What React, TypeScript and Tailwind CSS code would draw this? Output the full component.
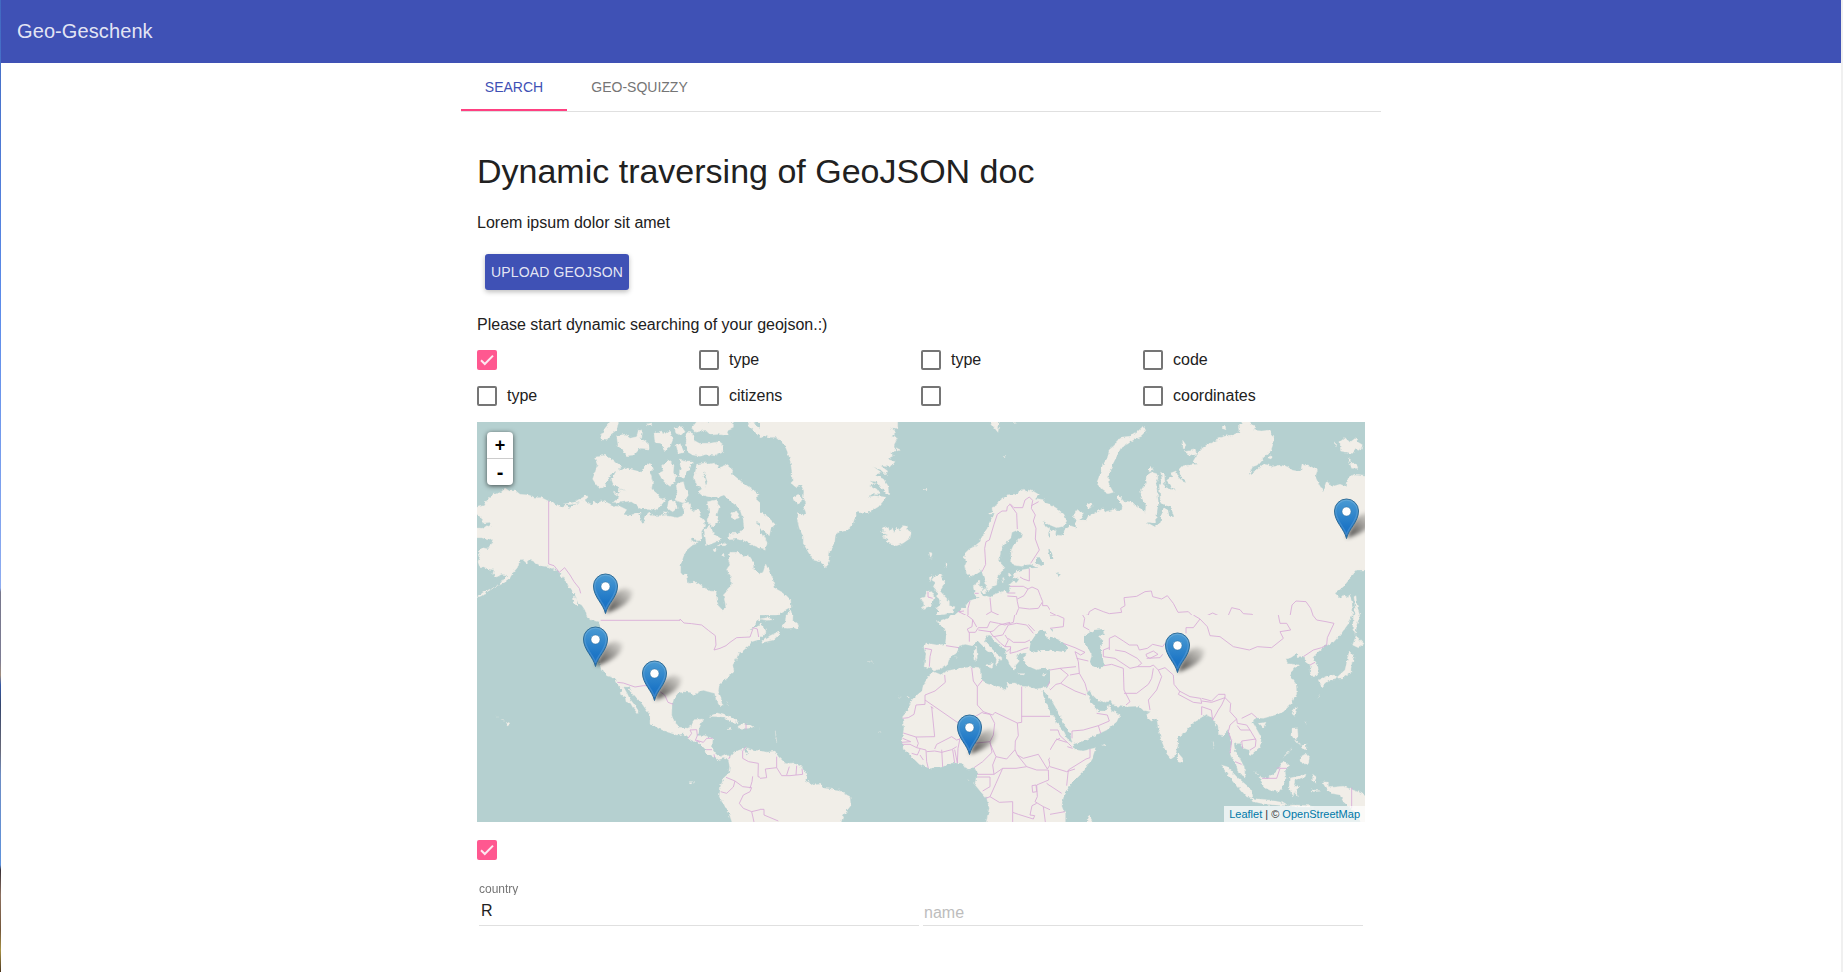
import React from "react";

const WATER = "#b5d0d0";
const LAND = "#f1eee8";

type Tile = { x: number; y: number; w: number; h: number; land: string; water?: string; borders: string };

const tiles: Tile[] = [
  {
    x: -7, y: -7, w: 290, h: 200,
    land:
      // mainland
      "M0 280L21 277 40 272 48 260 58 248 70 238 82 236 95 230 105 219 118 228 138 228 150 238 175 240 200 248 215 248 235 258 250 264 262 271 278 277 290 272 280 267 300 264 312 262 325 254 340 247 348 238 354 246 345 256 352 265 370 269 374 257 380 264 395 257 410 262 432 273 452 275 470 284 460 299 482 301 500 294 512 294 522 325 524 308 536 292 545 302 575 302 600 304 622 308 638 302 642 285 636 268 650 260 662 270 660 282 672 292 676 282 686 282 692 305 702 318 704 332 694 350 696 368 684 382 670 366 662 375 684 385 668 390 650 405 640 425 632 450 632 472 648 480 652 502 680 502 700 515 720 528 738 530 740 550 745 572 758 586 768 580 765 560 760 540 768 532 775 520 785 510 785 490 775 475 772 460 780 450 775 435 780 412 805 412 820 425 836 420 850 440 850 460 870 475 884 480 890 455 900 440V640H398L375 618 350 600 345 585 335 570 325 565 318 545 306 525 292 505 280 490 268 472 255 465 235 455 210 452 195 445 190 438 178 436 170 445 156 432 148 440 142 458 128 474 118 492 100 505 80 514 55 528 35 542 20 548 40 532 70 518 90 508 100 492 112 480 95 478 80 486 68 478 72 464 55 462 40 455 30 458 24 440 30 425 25 408 38 398 55 402 66 385 68 370 52 374 35 368 0 368V338L40 340 50 332 64 336 60 322 40 324 34 308 21 298 0 296Z" +
      // arctic islands
      "M374 127L405 121 430 135 455 155 442 165 420 180 405 212 390 221 378 208 368 192 376 170 382 150Z" +
      "M425 195L440 165 470 158 490 165 515 172 520 158 540 145 550 160 540 172 548 200 545 222 560 235 575 255 588 252 572 272 556 285 535 280 512 284 500 270 480 258 455 262 430 262 448 245 430 232 450 236 445 222 470 228 432 212Z" +
      "M566 175L580 168 575 155 595 135 612 150 610 170 618 182 612 205 600 214 582 200 575 190Z" +
      "M628 132L650 138 670 138 660 158 650 178 642 190 625 182 632 160Z" +
      "M618 206L640 200 645 220 655 240 640 264 615 255 622 230Z" +
      "M680 148L710 143 712 160 700 180 708 210 698 222 682 212 673 190Z" +
      "M392 65L405 40 420 21H445L440 45 420 60 410 76 395 74ZM440 62L465 58 480 70 500 65 505 42 515 48 512 70 535 85 538 102 510 100 492 120 470 122 460 108 444 92Z" +
      "M552 55L575 48 580 60 600 46 608 75 600 95 585 108 572 85 555 82ZM612 38L635 35 645 50 635 62 618 55ZM618 88L630 85 642 112 625 116Z" +
      "M652 52L668 55 670 75 688 85 720 85 745 80 760 92 758 112 735 122 710 118 690 124 668 120 652 110 648 80ZM680 20H790V40L770 48 776 62 745 58 722 60 706 45 678 52 665 40ZM525 28L545 24 545 32Z" +
      "M596 256L615 260 622 280 608 290 592 280ZM580 290L595 292 590 302 578 300Z" +
      // Baffin
      "M712 148L735 144 748 158 770 150 788 165 786 178 800 188 820 205 850 225 868 240 855 250 875 268 870 280 885 290 900 300V345L880 330 860 320 880 350 890 380 900 400 884 415 870 400 845 390 825 378 800 372 776 374 778 355 808 355 822 340 820 315 812 290 800 272 780 258 762 240 740 248 715 245 695 240 684 230 705 215 712 200 705 178Z" +
      "M712 260L738 255 748 275 740 300 745 320 728 335 710 318 718 295ZM702 345L720 332 735 360 755 372 735 382 710 392ZM782 295L800 288 808 308 790 314ZM745 392L765 380 770 392ZM727 403L740 402 735 412ZM755 420L762 415 762 428ZM832 28L850 45 865 62 900 72V0H860Z" +
      "M310 540L322 555 320 575 312 568ZM302 508L318 530 308 534ZM283 488L302 504 300 520Z",
    water: "M285 270L315 268 340 255 300 278ZM505 296L520 300 522 326 516 320ZM470 286L505 280 570 290 600 300 540 292 500 294ZM852 20L862 35 878 40 890 30Z",
    borders:
      "M236 258V447L252 452 268 472 284 458 300 480 312 500 328 520 332 535M398 616H630V612",
  },
  {
    x: 283, y: -7, w: 290, h: 200,
    land:
      // Greenland
      "M-30 0V65L0 68 12 62 30 67 50 67 65 80 78 100 86 120 92 145 96 170 97 208 110 218 122 208 132 228 130 245 138 265 130 275 138 292 130 302 116 292 112 315 118 340 130 365 130 385 145 412 160 435 180 440 198 456 205 440 210 405 224 382 226 358 240 350 262 347 280 322 285 305 294 285 300 296 330 290 355 275 380 247 345 242 324 246 336 234 360 236 350 222 328 210 348 208 328 197 350 200 362 215 380 236 386 236 384 212 370 192 345 180 364 172 340 155 362 164 378 180 383 168 362 152 392 156 405 140 382 132 400 122 392 110 406 112 402 90 412 70 395 64 408 50 392 38 413 40V0Z" +
      "M102 245L115 238 128 255 112 266 100 258ZM408 98L420 104 412 108Z" +
      "M362 350L375 352 365 338 384 334 388 348 396 338 402 350 410 338 418 345 430 332 442 334 443 345 453 352 450 370 430 384 410 392 398 390 378 380 388 372 368 366 384 360Z" +
      "M-20 282L0 292 20 302 45 328 32 342 28 362 14 350 0 340-20 330ZM-20 350L0 358 12 362 22 385 15 402 0 398-20 390ZM-20 475L0 475 10 470 17 447 25 465 38 490 45 520 72 535 92 555 93 578 75 588 55 600V604H-20ZM68 640L72 615 80 600 92 584 96 600 92 640Z" +
      // Britain and Ireland
      "M525 482L550 478 542 492 555 496 550 512 540 528 555 545 568 558 568 572 585 575 580 590 556 598 524 602 540 590 528 580 542 570 542 555 530 545 532 528 520 515 526 502 515 495ZM498 532L516 530 522 548 514 572 484 582 492 568 484 550 496 546ZM508 486L516 482 510 500ZM558 444L563 446 558 458ZM492 222L502 220 498 228ZM508 412L516 414 512 430Z" +
      // Europe
      "M615 415L628 402 642 395 658 382 668 362 682 340 692 315 704 297 682 297 698 290 696 278 712 270 716 258 735 250 742 240 765 238 780 228 792 222 800 232 812 224 835 238 825 250 850 254 858 264 875 270 900 285V340L875 332 862 325 848 318 856 335 872 345 865 358 876 375 895 380 900 360V650H530L530 625 558 622 562 608 580 604 598 588 612 580 628 558 642 553 656 548 645 540 640 515 650 500 660 496 657 512 670 520 660 532 668 542 690 546 700 540 730 528 745 536 752 522 750 508 758 500 770 503 778 492 762 488 760 475 780 466 812 460 838 458 810 448 785 454 760 450 752 438 754 405 762 388 782 368 786 352 772 345 756 352 752 370 736 384 722 405 718 438 732 452 726 472 712 486 710 510 694 516 690 528 680 524 676 500 668 478 664 464 655 472 632 486 620 476 614 455 620 440 612 430Z" +
      "M664 530L676 520 680 530 670 536ZM725 490L732 488 728 504ZM745 478L752 476 750 486ZM690 21H718L714 52 704 40ZM730 124L736 126 732 128ZM762 22L768 24Z",
    water: "M828 428L838 426 850 445 838 455 828 442ZM864 402L874 410 880 430 870 428ZM865 350L895 372 882 384 868 366ZM890 470L900 476 892 480Z",
    borders:
      "M666 470L677 448 674 400 678 380 688 375 702 328 712 298 726 288 740 288 742 275 750 268 770 295 772 342M750 266L762 278 788 278 795 255 808 246 818 256 814 280 826 300 820 318 828 340 826 372 838 405 812 445M814 272L836 260M808 462V498L790 492 780 486M750 514H790L804 522 816 516 834 524 842 545 848 560 835 580 808 582 776 578 772 560 770 545 742 543M804 522L792 542 772 552M742 534H766M690 548L694 590 680 598 676 610 690 620 700 618M694 590L716 600 730 610 762 614 776 580M644 535H656M630 558L624 580 624 604 596 590 612 588M624 604L636 618M848 562V572L862 572 875 592 900 604M716 600L720 622M504 530V546L518 550",
  },
  {
    x: 573, y: -7, w: 325, h: 200,
    land:
      "M-40 255L0 268 20 280 42 298 50 318 40 334 20 338 0 330-40 312Z" +
      "M-40 370L0 345 18 348 16 360 38 362 44 345 62 332 78 338 76 312 70 302 78 286 96 292 98 306 88 318 108 318 114 304 130 296 150 284 160 278 165 292 190 284 214 286 218 272 200 248 206 240 220 258 242 260 262 274 286 292 288 270 276 250 272 228 280 215 290 205 288 182 305 172 320 176 324 190 318 205 322 235 325 262 328 280 330 240 328 210 336 195 332 168 343 178 345 205 355 222 374 224 360 208 350 196 368 184 360 175 378 168 384 185 398 200 410 203 392 185 388 165 400 152 440 148 430 138 442 118 450 105 470 90 500 76 528 72 548 60 568 52 565 35 575 25 580 0H598L602 30 618 32 610 46 635 48 655 46 668 62 670 85 662 108 640 128 622 150 608 155 595 180 620 165 640 148 655 150 668 156 690 150 712 155 728 166 752 170 756 148 780 155 802 165 796 185 805 205 820 230 828 212 832 200 845 215 870 208 890 215 895 185 915 178 960 182V465H920L900 490 880 515 855 535 870 550 880 540 895 548 898 538 904 556 908 580V640H-40Z" +
      "M284 38L288 50 275 64 250 75 225 92 212 100 202 120 188 148 176 178 175 205 190 232 175 236 158 226 140 205 150 178 158 150 172 130 178 104 192 92 202 76 218 66 240 64 262 50 275 38ZM112 265L125 262 126 275 114 280ZM296 160L304 154 310 166 298 170Z" +
      "M870 80L885 68 900 82 918 68 922 80 938 90 930 106 918 102 906 116 890 112 872 108ZM900 145L918 144 924 160 905 160ZM895 130L902 134 898 140ZM855 80L860 88 858 96ZM652 128L662 122 664 132ZM398 76L408 90 400 102ZM402 110L435 104 440 118 425 122ZM515 40L525 30 528 44ZM502 70L530 62 545 66 518 78ZM912 545L918 542 920 570 930 600 932 620 916 626 912 600 916 580Z",
    water: "M322 285L330 240 332 265 350 272 362 275 372 305 358 305 354 285 342 278 334 300 332 322 315 335 290 322 312 324 320 305ZM0 405L6 415 10 432 0 432ZM20 470L32 482 26 486ZM340 200L356 220 345 216Z",
    borders:
      "M0 592L20 602 42 606V630M98 630L104 602 115 600 118 590 135 580 160 590 178 596 215 592 212 580 225 572 222 548 260 544 285 530 304 528 308 545 335 552 352 542 370 565 384 592 415 590 430 605 446 614 430 630M446 614L462 606 488 594 510 604 532 608 545 578 570 584 580 596 606 598 626 614 650 612 680 602 694 604 720 604 726 570 738 558 768 560 782 580 790 604 808 612 818 626M694 604L684 630M446 612L460 630",
  },
  {
    x: -7, y: 193, w: 290, h: 207,
    land:
      "M325-20L345 0 365 15 385 20 394 38 390 60 385 100 388 135 396 160 410 182 435 190 442 205 455 225 450 235 466 245 468 260 482 265 490 280 504 296 504 286 492 268 478 250 472 236 460 215 475 216 485 234 500 252 515 265 540 300 540 325 565 340 590 350 620 360 640 356 662 374 690 387 706 402 710 415 735 425 745 434 760 430 775 434 779 455 776 475 762 488 752 512 748 545 760 565 778 598 792 640H900V405L885 405 865 408 840 402 828 398 812 404 792 410 780 425 768 417 750 425 738 418 726 402 728 375 708 362 680 362 688 340 698 312 672 314 665 332 650 340 630 337 612 320 605 300 606 270 612 250 622 236 640 230 660 232 675 240 684 230 700 226 722 232 734 235 738 255 750 274 756 268 752 246 745 228 748 208 768 190 792 170 788 150 800 130 805 115 818 108 836 92 845 80 862 75 880 68 900 80V-20Z" +
      "M718 304L742 294 768 302 790 310 806 324 780 320 760 306ZM804 334L822 325 852 335 838 340 806 340ZM868 338L880 338 880 342 868 342ZM774 338L786 342 775 344ZM107 322L120 328 112 333ZM76 304L82 306ZM92 314L102 318ZM658 500L668 500 668 506 660 506ZM672 503L678 505Z" +
      "M770 262L776 270",
    water: "M830 50L850 38 860 20 885 5 900 0V15L888 30 865 32 850 42ZM878 35L900 44 890 50ZM828 400L834 405 832 420 826 412Z",
    borders:
      "M392 16H630V12L642 24 665 26 695 30 715 46 736 62 738 90 732 105 750 100 768 92 780 82 800 68 840 66 850 38 862 42 866 66M442 202L460 204 495 216 520 212 545 212M570 230L584 240 594 262 610 268M654 370L665 355 660 345 680 344 682 362 676 376 690 382M680 376L700 382 710 370 728 370M708 404L726 404M732 418L734 428M776 432L780 424M828 395L818 408 818 430 836 440 865 445 864 485 880 490 900 480M768 487L795 498 818 515 845 518 840 530 820 540 808 565 820 580 845 590 878 582 900 608M795 498L790 516 770 535 752 530M845 590L852 621M848 484L846 500 840 520M886 465L900 463M828 326V344",
  },
  {
    x: 283, y: 193, w: 290, h: 207,
    land:
      // South America and Atlantic Canada
      "M-20 405L0 407 20 412 45 408 55 425 78 446 100 444 125 455 142 482 136 495 160 510 182 508 192 520 235 525 270 545 272 572 250 600 238 640H-20ZM-20 20L0 28 15 40 18 52 5 65-20 62ZM5 80L30 62 55 50 58 58 40 75 10 82ZM64 38L76 22 80-20 100-20 98 18 112 24 118 45 102 38 85 40ZM-20-20H50V0H-20ZM0 12L20 8 42 14 20 16Z" +
      // Europe and Asia Minor
      "M572 0L565 10 532 20 540 32 552 36 560 55 556 88 530 90 498 84 492 98 498 118 492 155 510 158 522 168 545 160 562 148 570 125 592 112 598 92 616 88 636 92 652 76 668 92 684 108 704 120 710 135 706 155 718 142 714 128 724 136 726 128 708 114 690 96 674 78 678 62 690 60 704 78 722 92 736 102 738 122 748 148 762 166 768 150 778 138 768 122 790 114 800 114 796 122 790 132 802 152 830 164 850 160 868 164 878 175 872 195 862 215 830 222 806 215 786 214 768 204 744 205 738 224 705 214 680 206 662 192 660 158 640 156 600 160 560 168 545 180 525 172 510 178 490 210 486 228 458 252 444 285 428 305 432 340 426 375 430 400 455 425 478 448 508 460 545 456 575 444 605 444 618 462 645 460 652 475 644 508 662 530 680 550 688 580 682 605 676 640H900V-30H580Z" +
      "M676 150L700 145 696 160 678 154ZM640 108L650 105 652 130 642 136ZM646 92L651 100 646 104ZM770 176L795 176 790 180ZM846 180L862 176 852 184ZM414 243L424 248M440 243L448 248 444 250ZM585 130L592 128ZM325 140L340 142ZM355 352L365 350ZM46 350L50 380ZM624 494L628 498Z",
    water:
      "M808 106L812 82 825 62 842 46 862 50 852 60 870 72 900 60V110L850 104 828 112ZM870 50L890 45 886 55ZM848 226L862 240 876 265 892 290 900 300V335L888 330 882 305 864 275 850 245Z",
    borders:
      "M558 92L596 98M494 100L515 104 510 125 508 155M620 0L638 14 636 35 622 42 626 52 646 52 655 38 682 38 690 20 715 25 735 30 760 22 764 0M638 14L650 36M628 52V80M655 45L690 50 700 48 718 30 750 22M690 50L700 65 728 60 745 30 770 25 800 30 820 55M805 28L824 48M700 62L722 85 735 95 745 75 735 60M735 95L752 95 750 115 770 110 795 100 805 98M745 70L760 82 795 82 810 75M740 110L752 100M635 158L640 198 652 215V270L670 290M668 195L652 215M554 180L556 202 525 228 495 240V268L468 270 462 298 445 308 428 310M495 255L592 322 640 308 670 290 698 300 705 292 772 324 785 322V215M785 304H888M515 275L524 365 468 366 430 354M520 280L512 275M468 366L475 385 470 398 498 405 500 440 505 460M428 370L440 375 452 380 425 382M428 388L450 388 470 398M455 415L472 420 480 402M480 420L490 435M524 402L530 388 575 365 590 375 600 372M500 410L524 408 545 412 575 404 590 395M545 404L548 456M578 404L584 444M584 404L592 444M592 444L594 400 600 370M668 294L690 298 704 325 700 360 690 380 640 385M690 380L696 412 668 440 642 458M690 385L708 425 698 450 702 478H652M708 425L740 432 765 404 766 378 775 362 772 324M765 404L772 420 800 455 768 460 728 460 702 478M772 420L790 430 835 418 862 462 870 450 866 432 890 410M800 455L830 465 865 465 866 495 830 510 832 545 825 560 850 575 900 598M728 460L708 505 690 545 678 550M652 486H690V515L668 528M690 545L718 562 758 560V592L775 598 820 612 824 602 810 600 816 572 830 565M758 592V621M850 575L856 621M816 512L828 510 830 530 818 532ZM860 505L900 535M50 425L50 458 16 462 20 488 0 490M50 458L65 482 90 482 128 478 126 462M88 455L80 480M110 452L108 480M0 583H12V600L55 618M880 162L870 200 862 215M870 200L895 195 900 160M870 220L876 235 895 222",
  },
  {
    x: 573, y: 193, w: 325, h: 207,
    land:
      "M-40-20H910L906 0 896 25 870 60 850 82 822 95 800 115 788 128 802 148 806 172 798 182 784 186 780 168 782 152 766 140 764 122 742 125 740 116 722 128 706 132 714 146 746 150 730 162 720 182 738 208 740 238 722 268 700 290 675 300 640 310 618 308 608 322 634 368 630 395 600 422 598 405 582 400 572 385 552 386 556 412 568 428 582 455 586 486 566 474 558 448 544 428 540 408 546 382 534 342 520 362 506 358 504 335 486 310 470 298 450 310 432 320 408 348 385 364 383 395 376 420 362 430 350 416 334 375 325 340 320 308 304 318 286 302 302 290 280 286 266 273 225 275 190 272 182 258 165 262 142 254 128 240 118 226 110 234 120 255 134 275 142 288 162 288 172 284 178 268 184 288 210 298 200 320 170 345 130 364 100 378 68 388 60 355 40 325 30 300 8 262 0 250-40 200Z" +
      "M-40 250L0 300 14 302 20 325 42 350 54 375 68 385 75 405 100 408 137 398 128 425 100 470 62 508 42 540 35 570 46 598V640H-40Z" +
      "M384 414L398 430 396 444 384 440ZM513 450L532 455 560 485 600 520 606 548 590 545 560 510 535 480ZM603 550L650 554 695 562 712 572 650 568 608 560ZM716 570L740 570 780 572 790 576 740 576ZM630 486L652 492 682 468 700 438 716 452 705 470 708 490 690 530 660 526 640 515ZM718 490L768 478 765 486 735 494 732 510 750 515 738 525 745 545 732 532 728 546 718 518ZM726 340L742 338 744 362 738 375 752 388 738 382 726 362ZM752 425L770 415 778 425 776 445 760 448 750 435ZM752 392L768 385 768 405 756 400ZM698 428L726 398 715 412ZM816 500L835 502 835 518 862 515 880 514 960 545V640H945L915 590 880 560 870 540 845 535 830 522ZM788 478L798 485 794 505 788 495ZM785 524L812 528 790 530ZM742 276L735 304 726 296 732 280ZM628 325L648 322 640 338ZM805 196L832 184 852 180 862 186 885 165 892 135 898 108 912 125 904 150 902 172 880 188 858 190 838 196 815 216 810 205ZM908 90L918 62 942 86 925 98ZM912-20H922L930 0 920 30 916 58 908 42ZM118 600L128 622H108ZM155 390L165 388 165 392ZM490 380L492 402ZM780 582L770 600 750 606ZM670 585L690 595 680 598ZM615 470L624 480ZM765 320L768 325ZM800 248L808 242Z",
    water:
      "M-20 60L0 65 25 75 55 95 45 112 0 104-20 106ZM102 64L130 45 162 42 164 54 145 64 160 78 150 100 158 125 162 152 150 162 125 152 120 140 125 120 112 95 102 80ZM0 45L8 42 4 54Z",
    borders:
      "M98 0L104 10 100 35 118 45M178 105V70L195 62 220 78 238 90 262 90 268 105 292 100 308 88 338 95 345 85M178 98L160 105 160 125 195 130 225 150 240 160 262 155 275 145 262 130 225 110 195 105M288 118L310 108 324 118 300 130 290 125ZM290 130L330 128 338 118M262 155L300 155 310 150 325 165 345 158 370 180 372 208 388 228 420 245 452 250 455 265 430 262 385 238 390 228M408 55L408 38 430 38 450 12 430 0M450 12L472 35 480 62 510 65 550 95 598 105 622 95 665 98 700 70 690 50 722 45 710 25 690 25 685 0M788 0L800 15 828 20 852 25 832 68 830 90 815 98 790 105 760 125M780 150L795 142M455 250L485 258 505 238 525 238 525 248 485 262 455 258M525 248L515 270 505 285 488 315 484 285 455 275 455 300M525 248L542 265 540 290 560 312 540 330 535 350 545 378 540 415M560 312L562 325 590 330 600 345 590 345 572 345 562 332M575 310L605 295 620 308M600 345L618 375 616 395 600 405M575 378L618 372M575 378L578 400M555 440L575 448M325 165L335 185 320 225 295 255 300 285M222 235L260 235 295 208 305 190 310 160M220 160L222 225 240 260 228 270M162 152L185 148 220 160M40 85L75 98 105 112 92 120 75 110M75 110L85 140 88 175 105 205 112 230M80 130L115 138M0 165L30 160 78 155M30 160L55 180 32 205 18 208 0 225M60 180L88 175M32 205L75 228 108 240M66 370L66 348 100 345 145 332 178 318 172 300 140 295M145 332L152 355M0 345L24 345 30 362 55 385 65 395M30 370L18 375 0 405M18 372L50 382M52 395L68 400M120 402V428L108 432 55 465 50 512M0 455L50 470 75 462M0 512L35 535M0 598L45 590M905 518V580M636 490L680 490 690 460 710 460M680 460L690 458M0 0H20L42 10 40 35 0 40",
  },
];

const pins: [number, number][] = [
  [128.5, 192],
  [118.5, 245],
  [177.5, 279],
  [492.5, 333],
  [700.5, 251],
  [869.5, 117],
];

function Pin({ x, y }: { x: number; y: number }) {
  return (
    <g transform={`translate(${x} ${y})`}>
      <path d="M0-1 8-19Q19-30 27-23Q27-9 0-1Z" fill="url(#shade)" filter="url(#soft)" />
      <path d="M0-.5C-2-10-12-17-12-28A12 12 0 0 1 12-28C12-17 2-10 0-.5Z" fill="url(#pin)" stroke="#2e6c97" strokeWidth="1" />
      <path d="M0-4C-2-12-10.8-18-10.8-28A10.8 10.8 0 0 1 10.8-28C10.8-18 2-12 0-4Z" fill="none" stroke="#fff" strokeOpacity=".14" strokeWidth="1.2" />
      <circle cy="-27.5" r="4.5" fill="#fff" stroke="#2e6c97" strokeOpacity=".6" strokeWidth=".8" />
    </g>
  );
}

function WorldMap() {
  return (
    <svg width="888" height="400" viewBox="0 0 888 400" className="block">
      <defs>
        <linearGradient id="pin" x1="0" y1="0" x2="0" y2="1">
          <stop offset="0" stopColor="#4b9bd3" />
          <stop offset=".7" stopColor="#1d76c6" />
          <stop offset="1" stopColor="#1b70c4" />
        </linearGradient>
        <linearGradient id="shade" x1="0" y1="1" x2="1" y2="0">
          <stop offset="0" stopColor="#000" stopOpacity=".75" />
          <stop offset=".5" stopColor="#000" stopOpacity=".38" />
          <stop offset="1" stopColor="#000" stopOpacity=".05" />
        </linearGradient>
        <filter id="soft" x="-40%" y="-40%" width="180%" height="180%"><feGaussianBlur stdDeviation="2" /></filter>
        <filter id="coast" x="0" y="0" width="100%" height="100%">
          <feTurbulence type="fractalNoise" baseFrequency=".09" numOctaves="3" seed="4" result="n" />
          <feDisplacementMap in="SourceGraphic" in2="n" scale="11" xChannelSelector="R" yChannelSelector="G" />
        </filter>
      </defs>
      <rect width="888" height="400" fill={WATER} />
      {tiles.map((t) => (
        <svg key={`${t.x},${t.y}`} x={t.x} y={t.y} width={t.w} height={t.h} viewBox={`0 0 ${t.w * 3} ${t.h * 3}`}>
          <g filter="url(#coast)">
            <path d={t.land} fill={LAND} stroke={LAND} strokeWidth="1" />
            {t.water && <path d={t.water} fill={WATER} />}
          </g>
          <path d={t.borders} fill="none" stroke="#d9aed8" strokeWidth="2.7" strokeLinejoin="round" />
        </svg>
      ))}
      {pins.map(([x, y]) => <Pin key={x} x={x} y={y} />)}
    </svg>
  );
}

function Check({ label, checked }: { label?: string; checked?: boolean }) {
  return (
    <label className="flex h-5 items-center gap-[10px]">
      {checked ? (
        <span className="size-5 shrink-0 rounded-[2px] bg-[#ff5890]">
          <svg viewBox="0 0 20 20" className="size-5" fill="none" stroke="#fff" strokeOpacity=".87" strokeWidth="2">
            <path d="M4 10.2 7.8 14 16 5.6" />
          </svg>
        </span>
      ) : (
        <span className="size-5 shrink-0 rounded-[2px] border-2 border-[#757575]" />
      )}
      <span className="leading-5">{label}</span>
    </label>
  );
}

export default function App() {
  return (
    <div className="flex h-[972px] w-full overflow-hidden bg-white font-['Liberation_Sans',Arial,sans-serif] text-base text-[#212121]">
      <div className="w-px shrink-0 bg-[linear-gradient(to_bottom,#4169c0_0,#5b8bea_300px,#8eacf0_588px,#77778c_592px,#7c7c94_660px,#a18d7c_675px,#3559a8_685px,#34456d_705px,#686978_750px,#6d8dc5_775px,#5e92dc_865px,#392f36_870px,#8d7160_895px,#73563a_930px,#a89345_950px,#4d371f_972px)]" />
      <div className="flex grow flex-col">
        <header className="flex h-[63px] shrink-0 items-center bg-[#3f51b5] px-4 text-xl tracking-[0.1px] text-white/87">
          <h1 className="pb-px">Geo-Geschenk</h1>
        </header>
        <main className="ml-[460px] w-[920px]">
          <nav className="flex h-[49px] border-b border-[#e0e0e0] text-sm">
            <span className="h-12 w-[106px] border-b-2 border-[#ff4081] pt-[14px] text-center leading-5 text-[#3f51b5]">SEARCH</span>
            <span className="w-[145px] pt-[14px] text-center leading-5 text-[#757575]">GEO-SQUIZZY</span>
          </nav>
          <section className="px-4">
            <h2 className="mt-[39px] text-[34px] leading-10">Dynamic traversing of GeoJSON doc</h2>
            <p className="mt-[22px] leading-5">Lorem ipsum dolor sit amet</p>
            <button className="mt-[21px] ml-2 block h-9 w-[144px] rounded-[3px] bg-[#3f51b5] text-sm tracking-[0.14px] whitespace-nowrap text-white/87 shadow-[0_2px_5px_0_rgba(0,0,0,0.26)]">
              UPLOAD GEOJSON
            </button>
            <p className="mt-[25px] leading-5">Please start dynamic searching of your geojson.:)</p>
            <div className="mt-[15px] grid grid-cols-4 gap-y-4">
              <Check checked />
              <Check label="type" />
              <Check label="type" />
              <Check label="code" />
              <Check label="type" />
              <Check label="citizens" />
              <Check />
              <Check label="coordinates" />
            </div>
            <div className="relative mt-4 h-[400px] w-[888px] overflow-hidden">
              <WorldMap />
              <div className="absolute top-[10px] left-[10px] w-[26px] rounded-[4px] bg-white text-center font-bold text-black shadow-[0_1px_5px_rgba(0,0,0,0.65)]">
                <div className="h-[27px] border-b border-[#ccc] text-lg leading-[26px]">+</div>
                <div className="h-[26px] text-xl leading-[26px]">-</div>
              </div>
              <div className="absolute right-0 bottom-0 h-4 bg-white/70 px-[5px] text-[11px] leading-4 whitespace-nowrap text-[#333]">
                <span className="text-[#0078a8]">Leaflet</span> | © <span className="text-[#0078a8]">OpenStreetMap</span>
              </div>
            </div>
            <div className="mt-[18px]"><Check checked /></div>
            <div className="mt-5 flex gap-1 px-[2px]">
              <div className="h-[46px] w-[440px] border-b border-[#e0e0e0]">
                <div className="h-[18px] w-max origin-top-left scale-75 text-base leading-6 text-[#757575]">country</div>
                <div className="pl-[2px] leading-[26px]">R</div>
              </div>
              <div className="h-[46px] w-[440px] border-b border-[#e0e0e0] pt-[23px] pl-px leading-5 text-[#bdbdbd]">name</div>
            </div>
          </section>
        </main>
      </div>
      <div className="w-[2px] shrink-0 bg-[#f0f0f0]" />
    </div>
  );
}
